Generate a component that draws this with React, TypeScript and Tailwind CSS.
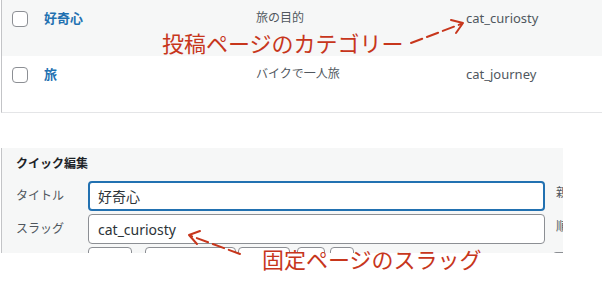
import React from "react";

const jp = { fontFamily: '"Noto Sans", "Noto Sans CJK JP", sans-serif' };

function Checkbox() {
  return <div className="w-[16px] h-[16px] rounded-[4px] border border-[#8c8f94] bg-white" />;
}

function Row({ name, desc, slug, bg }: { name: string; desc: string; slug: string; bg: string }) {
  return (
    <div className={`flex h-[56px] items-start pt-[8px] ${bg}`}>
      <div className="w-[42px] shrink-0 pl-[10px] pt-[3px]">
        <Checkbox />
      </div>
      <div className="w-[212px] shrink-0 text-[13px] leading-[20px] font-bold text-[#2271b1]">{name}</div>
      <div className="w-[210px] shrink-0 text-[12px] leading-[20px] text-[#50575e]">{desc}</div>
      <div className="text-[13px] leading-[20px] text-[#50575e]">{slug}</div>
    </div>
  );
}

export default function App() {
  return (
    <div className="relative w-[602px] h-[300px] bg-white overflow-hidden" style={jp}>
      {/* table */}
      <div className="ml-[1px] border-l border-b border-l-[#c3c4c7] border-b-[#e4e5e7]">
        <Row name="好奇心" desc="旅の目的" slug="cat_curiosty" bg="bg-[#f6f7f7]" />
        <Row name="旅" desc="バイクで一人旅" slug="cat_journey" bg="bg-white" />
      </div>

      {/* quick edit panel */}
      <div className="mt-[35px] ml-[1px] w-[562px] h-[105px] overflow-hidden border-l border-[#c3c4c7] bg-[#f6f7f7] pl-[14px] pt-[8px]">
        <div className="text-[12px] leading-[16px] font-bold text-[#1d2327]">クイック編集</div>
        <div className="mt-[9px] flex items-center h-[30px]">
          <div className="w-[72px] shrink-0 text-[12px] text-[#50575e]">タイトル</div>
          <div className="w-[457px] shrink-0 h-[30px] rounded-[4px] border-2 border-[#2271b1] bg-white pl-[8px] flex items-center text-[14px] text-[#2c3338]">
            好奇心
          </div>
          <div className="ml-[11px] shrink-0 text-[12px] text-[#50575e] -mt-[6px] whitespace-nowrap">親カテゴリー</div>
        </div>
        <div className="mt-[3px] flex items-center h-[30px]">
          <div className="w-[72px] shrink-0 text-[12px] text-[#50575e]">スラッグ</div>
          <div className="w-[457px] shrink-0 h-[30px] rounded-[4px] border border-[#8c8f94] bg-white pl-[9px] flex items-center text-[14px] text-[#2c3338]">
            cat_curiosty
          </div>
          <div className="ml-[11px] shrink-0 text-[12px] text-[#50575e] -mt-[4px] whitespace-nowrap">順序</div>
        </div>
        <div className="mt-[3px] flex items-start h-[30px]">
          <div className="w-[72px] shrink-0" />
          <div className="w-[44px] shrink-0 h-[30px] rounded-[4px] border border-[#8c8f94] bg-white" />
          <div className="ml-[13px] w-[91px] shrink-0 h-[30px] rounded-[4px] border border-[#8c8f94] bg-white" />
          <div className="ml-[2px] w-[52px] shrink-0 h-[30px] rounded-[4px] border border-[#8c8f94] bg-white" />
          <div className="ml-[7px] w-[28px] shrink-0 h-[30px] rounded-[4px] border border-[#8c8f94] bg-white" />
          <div className="ml-[5px] w-[24px] shrink-0 h-[30px] rounded-[4px] border border-[#8c8f94] bg-white" />
          <div className="ml-[199px] mt-[5px] w-[20px] shrink-0 h-[30px] rounded-[3px] border border-[#8c8f94] bg-white" />
        </div>
      </div>

      {/* annotations */}
      <span className="absolute left-[162px] top-[32px] text-[22px] leading-[22px] text-[#c7361c] whitespace-nowrap">
        投稿ページのカテゴリー
      </span>
      <span className="absolute left-[262px] top-[248px] text-[22px] leading-[22px] text-[#c7361c] whitespace-nowrap">
        固定ページのスラッグ
      </span>
      <svg className="absolute left-0 top-0" width="602" height="300" viewBox="0 0 602 300" fill="none">
        <g stroke="#c7361c" strokeWidth="2" strokeLinecap="round">
          <line x1="411" y1="43" x2="461" y2="24" strokeDasharray="12 5" />
          <polyline points="451,20 463,23 456,33" strokeLinejoin="round" />
          <line x1="240" y1="254" x2="191" y2="236" strokeDasharray="12 5" />
          <polyline points="200,231 189,235 197,244" strokeLinejoin="round" />
        </g>
      </svg>
    </div>
  );
}
